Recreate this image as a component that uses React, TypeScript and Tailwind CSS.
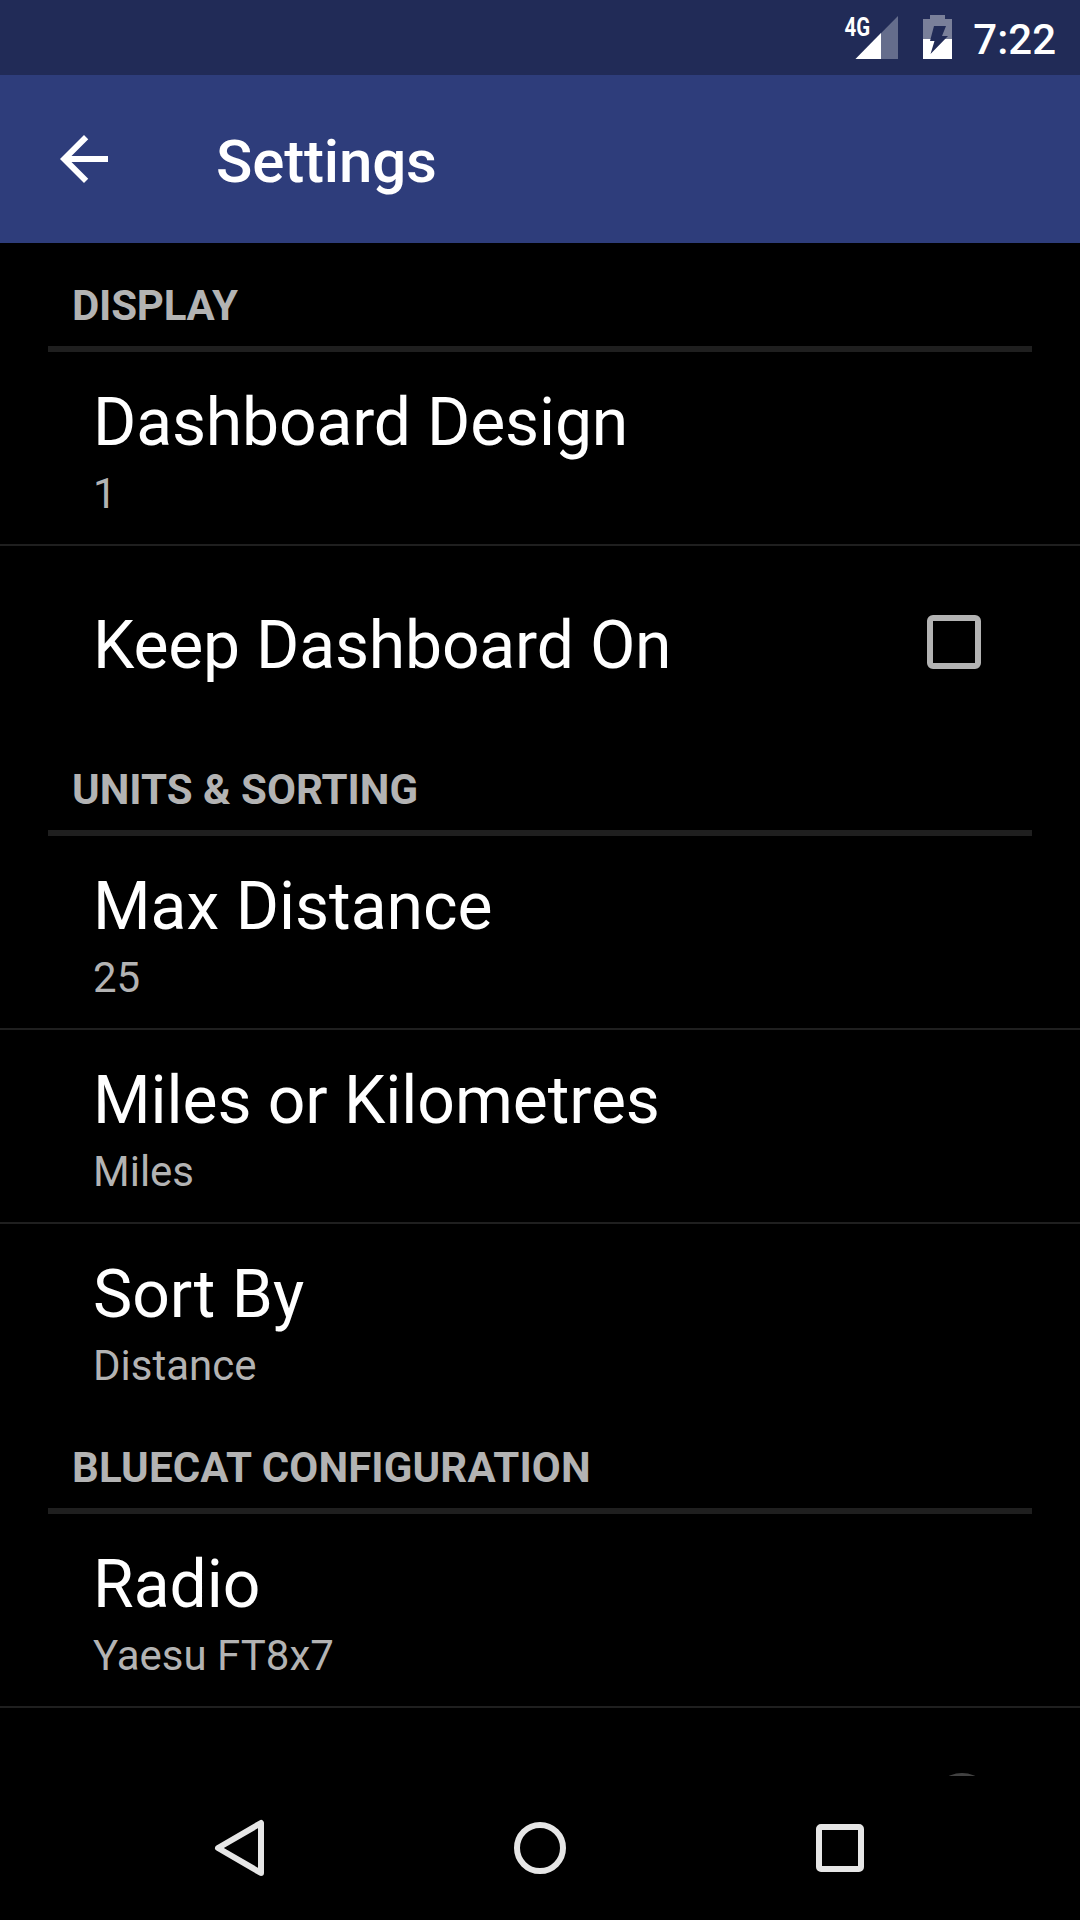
import type { ReactNode } from "react";

function Header({ title, className = "" }: { title: string; className?: string }) {
  return (
    <div className={`mx-12 h-[98px] shrink-0 border-b-6 border-[#1f1f1f] pl-6 pt-[27px] text-[42px] font-bold leading-[49px] text-[#b3b3b3] ${className}`}>
      {title}
    </div>
  );
}

type RowProps = {
  title: string;
  summary?: string;
  last?: boolean;
  className?: string;
  children?: ReactNode;
};

function Row({ title, summary, last, className = "", children }: RowProps) {
  return (
    <div className={`flex shrink-0 items-center justify-between pl-[93px] pr-[99px] ${last ? "h-48" : "h-[194px] border-b-2 border-[#1f1f1f]"}`}>
      <div className={summary ? "mt-1.5" : "mt-2"}>
        <div className={`text-[66px] leading-[78px] text-white ${className}`}>{title}</div>
        {summary && <div className="mt-[7px] text-[42px] leading-[49px] text-[#b3b3b3]">{summary}</div>}
      </div>
      {children}
    </div>
  );
}

function SignalIcon() {
  return (
    <svg width="62" height="52" viewBox="-8 -8 62 52" className="-mt-2 mr-[25px]">
      <path d="M54 1v43H11.5z" fill="#656d8c" />
      <path d="M37 18v26H11.5z" fill="#fff" />
      <text x="0" y="0" transform="translate(0.6 20.6) scale(0.8 1)" fontSize="25.5" fontWeight="700" fill="#fff">
        4G
      </text>
    </svg>
  );
}

function BatteryIcon() {
  return (
    <svg width="29" height="44" viewBox="0 0 29 44" className="mr-[21px]">
      <path d="M0 4h7V0h15v4h7v20H0z" fill="#7a809a" />
      <path d="M0 24h29v20H0z" fill="#fff" />
      <path d="M11 11h12l-4 10h6L7.5 39l4-13H7z" fill="#212b57" />
    </svg>
  );
}

function App() {
  return (
    <div className="flex h-[1920px] w-[1080px] flex-col overflow-hidden bg-black font-[Roboto,sans-serif]">
      {/* Status bar */}
      <div className="flex h-[75px] shrink-0 items-start justify-end bg-[#212b57] pr-6 pt-[15px] text-white">
        <SignalIcon />
        <BatteryIcon />
        <span className="text-[42px] font-medium leading-[49px]">7:22</span>
      </div>

      {/* App bar */}
      <div className="flex h-[168px] shrink-0 items-center bg-[#2e3d7b] pl-[60px]">
        <svg width="48" height="48" viewBox="0 0 16 16">
          <path d="M16 7H3.83l5.59-5.59L8 0 0 8l8 8 1.41-1.41L3.83 9H16z" fill="#fff" />
        </svg>
        <h1 className="ml-[108px] mt-[5px] text-[60px] font-medium leading-[70px] tracking-[-0.15px] text-white">Settings</h1>
      </div>

      {/* Preference list */}
      <div className="flex h-[1533px] shrink-0 flex-col overflow-hidden pt-[11px]">
        <Header title="DISPLAY" className="tracking-[-0.2px]" />
        <Row title="Dashboard Design" summary="1" className="tracking-[-0.15px]" />
        <Row title="Keep Dashboard On" className="tracking-[-0.18px]" last>
          <div className="h-[54px] w-[54px] rounded-[6px] border-6 border-[#b3b3b3]" />
        </Row>
        <Header title="UNITS & SORTING" />
        <Row title="Max Distance" summary="25" />
        <Row title="Miles or Kilometres" summary="Miles" className="tracking-[-0.06px]" />
        <Row title="Sort By" summary="Distance" last />
        <Header title="BLUECAT CONFIGURATION" className="tracking-[0.13px]" />
        <Row title="Radio" summary="Yaesu FT8x7" />
        {/* Switch row, mostly scrolled out of view */}
        <div className="flex h-48 shrink-0 items-start justify-end pr-[88px] pt-[65px]">
          <div className="h-[60px] w-[60px] rounded-full bg-[#424242]" />
        </div>
      </div>

      {/* Navigation bar */}
      <div className="grid h-36 shrink-0 grid-cols-3 place-items-center px-[90px]">
        <svg width="84" height="84" viewBox="0 0 84 84" fill="none" stroke="#e6e6e6" strokeWidth="6" strokeLinejoin="round">
          <path d="M20 42 63 17v50z" />
        </svg>
        <svg width="84" height="84" viewBox="0 0 84 84" fill="none" stroke="#e6e6e6" strokeWidth="6">
          <circle cx="42" cy="42" r="23" />
        </svg>
        <div className="h-12 w-12 rounded-[5px] border-6 border-[#e6e6e6]" />
      </div>
    </div>
  );
}

export default App;
